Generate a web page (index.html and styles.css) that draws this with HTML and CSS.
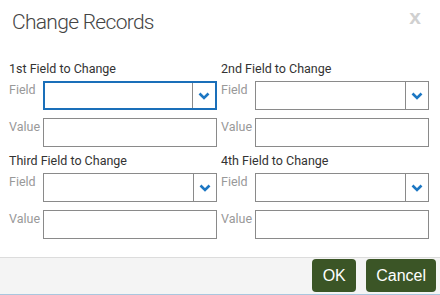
FILE: index.html
```html
<!DOCTYPE html>
<html lang="en">
<head>
    <meta charset="UTF-8">
    <meta name="viewport" content="width=device-width, initial-scale=1.0">
    <title>Change Records</title>
    <link rel="stylesheet" href="styles.css">
</head>
<body>
    <div class="dialog">
        <div class="dialog-header">
            <h1>Change Records</h1>
            <span class="close">x</span>
        </div>
        <div class="dialog-body">
            <div class="change-group">
                <div class="group-title">1st Field to Change</div>
                <div class="row">
                    <label>Field</label>
                    <div class="select focused">
                        <span class="select-value"></span>
                        <span class="select-arrow"><svg width="12" height="8" viewBox="0 0 12 8"><polyline points="1.5,1.5 6,6 10.5,1.5" fill="none" stroke="#1c77c3" stroke-width="2.6"/></svg></span>
                    </div>
                </div>
                <div class="row">
                    <label>Value</label>
                    <input type="text" class="text-input">
                </div>
            </div>
            <div class="change-group">
                <div class="group-title">2nd Field to Change</div>
                <div class="row">
                    <label>Field</label>
                    <div class="select">
                        <span class="select-value"></span>
                        <span class="select-arrow"><svg width="12" height="8" viewBox="0 0 12 8"><polyline points="1.5,1.5 6,6 10.5,1.5" fill="none" stroke="#1c77c3" stroke-width="2.6"/></svg></span>
                    </div>
                </div>
                <div class="row">
                    <label>Value</label>
                    <input type="text" class="text-input">
                </div>
            </div>
            <div class="change-group">
                <div class="group-title">Third Field to Change</div>
                <div class="row">
                    <label>Field</label>
                    <div class="select">
                        <span class="select-value"></span>
                        <span class="select-arrow"><svg width="12" height="8" viewBox="0 0 12 8"><polyline points="1.5,1.5 6,6 10.5,1.5" fill="none" stroke="#1c77c3" stroke-width="2.6"/></svg></span>
                    </div>
                </div>
                <div class="row">
                    <label>Value</label>
                    <input type="text" class="text-input">
                </div>
            </div>
            <div class="change-group">
                <div class="group-title">4th Field to Change</div>
                <div class="row">
                    <label>Field</label>
                    <div class="select">
                        <span class="select-value"></span>
                        <span class="select-arrow"><svg width="12" height="8" viewBox="0 0 12 8"><polyline points="1.5,1.5 6,6 10.5,1.5" fill="none" stroke="#1c77c3" stroke-width="2.6"/></svg></span>
                    </div>
                </div>
                <div class="row">
                    <label>Value</label>
                    <input type="text" class="text-input">
                </div>
            </div>
        </div>
        <div class="dialog-footer">
            <button class="button">OK</button>
            <button class="button">Cancel</button>
        </div>
    </div>
</body>
</html>
```

FILE: styles.css
```css
body {
    margin: 0;
    background-color: #fff;
    font-family: Roboto, 'Liberation Sans', sans-serif;
    color: #333;
}
.dialog {
    width: 440px;
    height: 295px;
    display: flex;
    flex-direction: column;
    border-bottom: 1px solid #a9c6de;
    box-sizing: border-box;
}
.dialog-header {
    height: 60px;
    display: flex;
    justify-content: space-between;
    align-items: flex-start;
    padding: 0 19px 0 12px;
    box-sizing: border-box;
}
.dialog-header h1 {
    margin: 0;
    padding-top: 7px;
    font-size: 21px;
    font-weight: 300;
    letter-spacing: -0.7px;
    line-height: 30px;
    color: #444;
}
.close {
    font-family: 'Liberation Sans', Arial, sans-serif;
    font-weight: bold;
    font-size: 21px;
    line-height: 30px;
    padding-top: 2px;
    color: #d0d0d0;
}
.dialog-body {
    flex: 1;
    display: grid;
    grid-template-columns: 208px 208px;
    column-gap: 4px;
    row-gap: 5px;
    padding: 0 0 0 9px;
    align-content: start;
}
.change-group {
    display: flex;
    flex-direction: column;
}
.group-title {
    font-size: 12.5px;
    line-height: 18px;
    margin-bottom: 3px;
    color: #333;
}
.row {
    display: flex;
    align-items: flex-start;
    margin-bottom: 8px;
}
.row:last-child {
    margin-bottom: 0;
}
.row label {
    width: 34px;
    font-size: 12.5px;
    line-height: 16px;
    padding-top: 1px;
    color: #999;
}
.select {
    width: 174px;
    height: 29px;
    box-sizing: border-box;
    border: 1px solid #8a8a8a;
    display: flex;
    background: #fff;
}
.select.focused {
    border: 2px solid #1a6fb9;
}
.select-value {
    flex: 1;
}
.select-arrow {
    width: 22px;
    border-left: 1px solid #8a8a8a;
    display: flex;
    align-items: center;
    justify-content: center;
}
.text-input {
    width: 174px;
    height: 29px;
    box-sizing: border-box;
    border: 1px solid #8a8a8a;
    margin: 0;
    padding: 0 4px;
    font-family: inherit;
}
.dialog-footer {
    height: 37px;
    box-sizing: border-box;
    border-top: 1px solid #dcdcdc;
    background-color: #f4f4f4;
    display: flex;
    justify-content: flex-end;
    align-items: flex-start;
    gap: 10px;
    padding: 1px 4px 0 0;
}
.button {
    height: 33px;
    padding: 0 10px;
    background-color: #3b5526;
    color: #fff;
    border: none;
    border-radius: 4px;
    font-family: 'Liberation Sans', Arial, sans-serif;
    font-size: 16px;
    cursor: pointer;
}
.button:first-child {
    width: 44px;
}
```
